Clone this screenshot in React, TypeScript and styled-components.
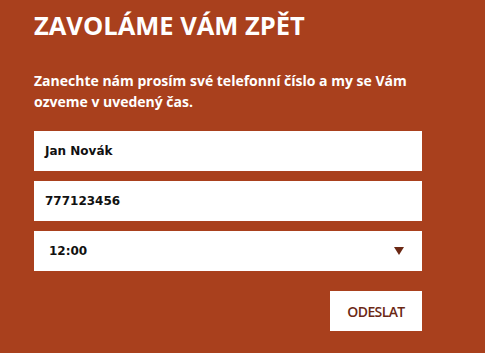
import React from "react";
import styled, { createGlobalStyle } from "styled-components";

const Global = createGlobalStyle`
  html, body { margin: 0; padding: 0; background: #a9401d; }
  * { box-sizing: border-box; }
`;

const Panel = styled.div`
  width: 485px;
  height: 353px;
  background: #a9401d;
  padding: 9px 63px 0 34px;
  display: flex;
  flex-direction: column;
`;

const Title = styled.h2`
  margin: 0;
  font-family: "Open Sans", sans-serif;
  font-weight: 700;
  font-size: 25.5px;
  line-height: 32px;
  color: #fff;
`;

const Lead = styled.p`
  margin: 29px 0 0;
  font-family: "Open Sans", sans-serif;
  font-weight: 700;
  font-size: 14px;
  line-height: 21px;
  color: #fff;
`;

const Form = styled.form`
  margin-top: 19px;
  display: flex;
  flex-direction: column;
  gap: 10px;
`;

const Field = styled.div<{ $indent?: number }>`
  position: relative;
  height: 40px;
  background: #fff;
  display: flex;
  align-items: center;
  padding-left: ${(p) => p.$indent ?? 11}px;
  font-family: Verdana, "DejaVu Sans", sans-serif;
  font-weight: 700;
  font-size: 12px;
  color: #111;
`;

const Arrow = styled.svg`
  position: absolute;
  right: 18px;
  top: 16px;
`;

const Actions = styled.div`
  display: flex;
  justify-content: flex-end;
  margin-top: 10px;
`;

const Button = styled.button`
  width: 92px;
  height: 40px;
  border: 0;
  background: #fff;
  color: #6b2814;
  font-family: "Open Sans", sans-serif;
  font-weight: 600;
  font-size: 14px;
  letter-spacing: -0.6px;
  padding: 0;
`;

export default function App() {
  return (
    <>
      <Global />
      <Panel>
        <Title>ZAVOLÁME VÁM ZPĚT</Title>
        <Lead>
          Zanechte nám prosím své telefonní číslo a my se Vám ozveme v uvedený čas.
        </Lead>
        <Form>
          <Field>Jan Novák</Field>
          <Field>777123456</Field>
          <Field $indent={15}>
            12:00
            <Arrow width="10" height="8" viewBox="0 0 10 8">
              <path d="M0 0 H10 L5 8 Z" fill="#6b2814" />
            </Arrow>
          </Field>
          <Actions>
            <Button type="button">ODESLAT</Button>
          </Actions>
        </Form>
      </Panel>
    </>
  );
}
